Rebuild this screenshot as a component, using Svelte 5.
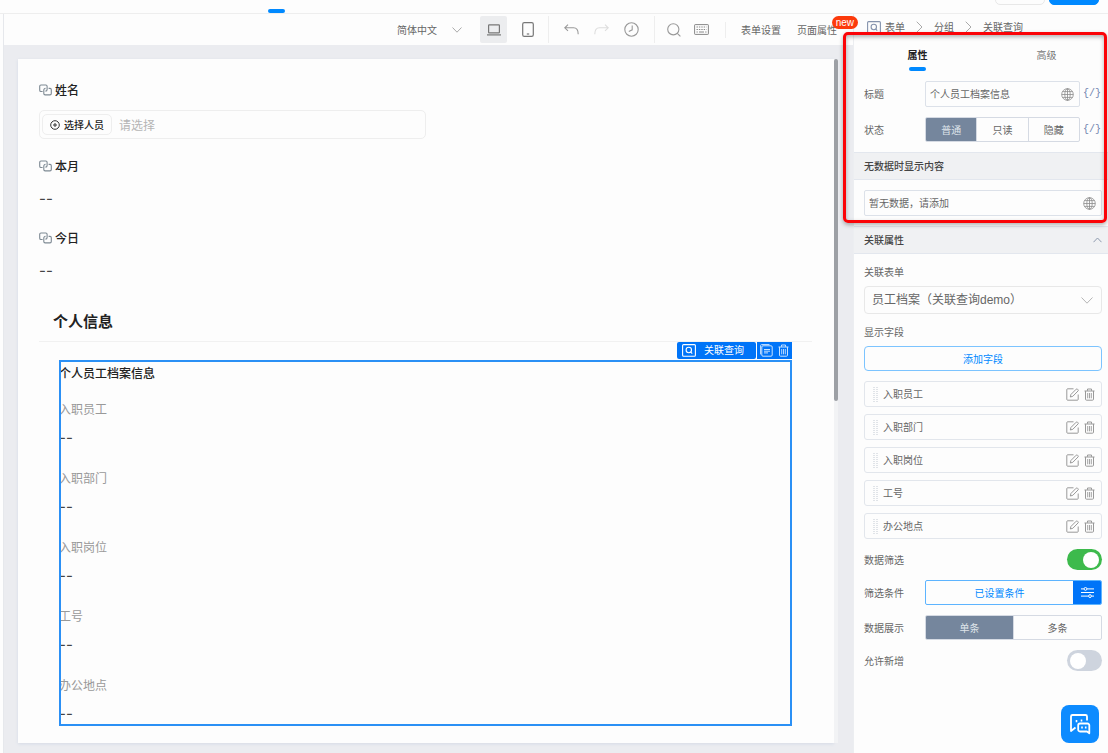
<script lang="ts">
    interface Field {
        id: number;
        name: string;
    }

    const fields: Field[] = [
        { id: 1, name: "入职员工" },
        { id: 2, name: "入职部门" },
        { id: 3, name: "入职岗位" },
        { id: 4, name: "工号" },
        { id: 5, name: "办公地点" },
    ];
    const states = ["普通", "只读", "隐藏"];
    const displayModes = ["单条", "多条"];

    let title = $state("个人员工档案信息");
    let emptyText = $state("暂无数据，请添加");
    let person = $state("");
    let tab = $state("属性");
    let fieldState = $state("普通");
    let displayMode = $state("单条");
    let filterOn = $state(true);
    let allowCreate = $state(false);
</script>

{#snippet linkIcon()}
    <svg class="link-icon" width="13" height="12" viewBox="0 0 13 12" fill="none" stroke="#7d8993" stroke-width="1.1">
        <path d="M3.6 7.5H2A1.3 1.3 0 0 1 .7 6.2V2.300A1.300 1.300 0 0 1 2 1h4.800a1.300 1.300 0 0 1 1.300 1.300V5.400A1.700 1.700 0 0 1 6.400 7.100" />
        <path d="M9.600 4.400H11a1.300 1.300 0 0 1 1.300 1.300v3.900A1.300 1.300 0 0 1 11 10.900H6.100A1.300 1.300 0 0 1 4.800 9.600V6.100a1.700 1.700 0 0 1 1.700-1.700" />
    </svg>
{/snippet}

{#snippet queryIcon()}
    <svg width="14" height="13" viewBox="0 0 14 13" fill="none" stroke="currentColor" stroke-width="1.1">
        <rect x="0.6" y="0.6" width="12.8" height="11.6" rx="1" />
        <circle cx="6.800" cy="6" r="2.700" />
        <path d="M8.800 8l1.400 1.600" />
    </svg>
{/snippet}

{#snippet globeIcon()}
    <svg width="13" height="13" viewBox="0 0 13 13" fill="none" stroke="#8c8c8c" stroke-width="0.8">
        <circle cx="6.500" cy="6.500" r="5.800" />
        <ellipse cx="6.500" cy="6.500" rx="2.700" ry="5.800" />
        <path d="M6.500.7v11.600M.7 6.500h11.600M1.500 3.600h10M1.500 9.400h10" />
    </svg>
{/snippet}

{#snippet trashIcon()}
    <svg width="11" height="13" viewBox="0 0 11 13" fill="none" stroke="currentColor">
        <path d="M.5 3h10M3.500 2.800V1h4v1.800M1.500 3v8.200a1 1 0 0 0 1 1h6a1 1 0 0 0 1-1V3" />
        <path d="M3.700 5v5.300M5.500 5v5.300M7.300 5v5.300" stroke-width="0.9" />
    </svg>
{/snippet}

{#snippet toggle(id: string, on: boolean, flip: () => void)}
    <input {id} class="switch" type="checkbox" role="switch" checked={on} onchange={flip} />
{/snippet}

<div class="app">
    <header class="topbar">
        <span class="nav-active"></span>
        <div class="top-actions">
            <button type="button" class="top-btn" aria-label="预览"></button>
            <button type="button" class="top-btn primary" aria-label="保存"></button>
        </div>
    </header>

    <div class="body">
        <main class="designer">
            <div class="toolbar">
                <label class="lang">
                    <select aria-label="语言">
                        <option>简体中文</option>
                    </select>
                    <svg width="10" height="6" viewBox="0 0 10 6" fill="none" stroke="#aaa">
                        <path d="M.5.5L5 5.200 9.500.5" />
                    </svg>
                </label>
                <div class="tools devices">
                    <button type="button" class="tool active" aria-label="电脑端">
                        <svg width="14" height="12" viewBox="0 0 14 12" fill="none" stroke="#777" stroke-width="1.2">
                            <rect x="1.6" y="0.8" width="10.8" height="8" rx="0.6" />
                            <path d="M0 10.900h14" />
                        </svg>
                    </button>
                    <button type="button" class="tool" aria-label="手机端">
                        <svg width="12" height="15" viewBox="0 0 12 15" fill="none" stroke="#777" stroke-width="1.2">
                            <rect x="0.7" y="0.7" width="10.6" height="13.6" rx="1.6" />
                            <path d="M4.800 12h2.400" />
                        </svg>
                    </button>
                </div>
                <div class="tools history">
                    <button type="button" class="tool" aria-label="撤销">
                        <svg width="15" height="11" viewBox="0 0 15 11" fill="none" stroke="#999" stroke-width="1.1">
                            <path d="M4 .7L.8 3.800 4 6.900M.8 3.800h8.700c3 0 4.700 2 4.700 6.500" />
                        </svg>
                    </button>
                    <button type="button" class="tool" aria-label="重做">
                        <svg width="15" height="11" viewBox="0 0 15 11" fill="none" stroke="#ddd" stroke-width="1.1">
                            <path d="M11 .7l3.200 3.100L11 6.900M14.200 3.800H5.500c-3 0-4.700 2-4.700 6.500" />
                        </svg>
                    </button>
                    <button type="button" class="tool" aria-label="历史">
                        <svg width="15" height="15" viewBox="0 0 15 15" fill="none" stroke="#999" stroke-width="1.1">
                            <circle cx="7.500" cy="7.500" r="6.700" />
                            <path d="M8.200 3.600v4.200L4.800 9.400" />
                        </svg>
                    </button>
                </div>
                <div class="tools search">
                    <button type="button" class="tool" aria-label="搜索">
                        <svg width="14" height="14" viewBox="0 0 14 14" fill="none" stroke="#999" stroke-width="1.1">
                            <circle cx="6.300" cy="6.300" r="5.600" />
                            <path d="M10.300 10.300l3.100 3.100" />
                        </svg>
                    </button>
                    <button type="button" class="tool" aria-label="快捷键">
                        <svg width="15" height="11" viewBox="0 0 15 11" fill="none" stroke="#888">
                            <rect x="0.6" y="0.6" width="13.8" height="9.8" rx="0.6" />
                            <path d="M2.500 3h10M2.500 5.500h10" stroke-dasharray="1.4 1" />
                            <path d="M2.500 8h1.300M5 8h5M11.200 8h1.300" />
                        </svg>
                    </button>
                </div>
                <div class="tools links">
                    <button type="button" class="text-btn">表单设置</button>
                    <button type="button" class="text-btn">
                        页面属性
                        <span class="badge">new</span>
                    </button>
                </div>
            </div>

            <div class="canvas">
                <div class="page">
                    <div class="field">
                        <label class="field-label" for="person">{@render linkIcon()}姓名</label>
                        <div class="picker">
                            <button type="button" class="pick-btn">
                                <svg width="10" height="10" viewBox="0 0 10 10" fill="none" stroke="#333">
                                    <circle cx="5" cy="5" r="4.300" />
                                    <path d="M5 3v4M3 5h4" />
                                </svg>
                                选择人员
                            </button>
                            <input id="person" type="text" placeholder="请选择" bind:value={person} />
                        </div>
                    </div>
                    <div class="field">
                        <div class="field-label">{@render linkIcon()}本月</div>
                        <div class="value">--</div>
                    </div>
                    <div class="field">
                        <div class="field-label">{@render linkIcon()}今日</div>
                        <div class="value">--</div>
                    </div>

                    <h2 class="group-title">个人信息</h2>

                    <section class="selected">
                        <div class="handle">
                            <span class="handle-name">{@render queryIcon()}关联查询</span>
                            <span class="handle-tools">
                                <button type="button" aria-label="复制">
                                    <svg width="13" height="13" viewBox="0 0 13 13" fill="none" stroke="currentColor">
                                        <path d="M9.500.6H1.600a1 1 0 0 0-1 1v8.800" />
                                        <rect x="1.8" y="1.8" width="10.4" height="10.4" rx="1.2" />
                                        <path d="M4 5.500h6M4 7.200h6M4 8.900h4" />
                                    </svg>
                                </button>
                                <button type="button" aria-label="删除">{@render trashIcon()}</button>
                            </span>
                        </div>
                        <h3>{title}</h3>
                        {#each fields as field (field.id)}
                            <div class="query-field">
                                <div class="query-label">{field.name}</div>
                                <div class="value">--</div>
                            </div>
                        {/each}
                    </section>
                </div>
                <div class="scroll-track"><div class="scroll-thumb"></div></div>
            </div>
        </main>

        <aside class="panel">
            <nav class="crumbs">
                <a href="#form">{@render queryIcon()}表单</a>
                <svg width="7" height="12" viewBox="0 0 7 12" fill="none" stroke="#aaa"><path d="M.7.7L6 6 .7 11.300" /></svg>
                <a href="#group">分组</a>
                <svg width="7" height="12" viewBox="0 0 7 12" fill="none" stroke="#aaa"><path d="M.7.7L6 6 .7 11.300" /></svg>
                <a href="#query">关联查询</a>
            </nav>

            <div class="highlighted">
                <div class="tabs">
                    <button type="button" class="tab" class:active={tab === "属性"} onclick={() => (tab = "属性")}>属性</button>
                    <button type="button" class="tab" class:active={tab === "高级"} onclick={() => (tab = "高级")}>高级</button>
                </div>
                <div class="rows">
                    <div class="row">
                        <label for="title">标题</label>
                        <div class="text-box">
                            <input id="title" type="text" bind:value={title} />
                            {@render globeIcon()}
                        </div>
                        <button type="button" class="expr" aria-label="标题表达式">{"{/}"}</button>
                    </div>
                    <div class="row">
                        <span>状态</span>
                        <div class="segment">
                            {#each states as s (s)}
                                <button type="button" class:active={fieldState === s} onclick={() => (fieldState = s)}>{s}</button>
                            {/each}
                        </div>
                        <button type="button" class="expr" aria-label="状态表达式">{"{/}"}</button>
                    </div>
                </div>
                <label class="section-head" for="empty-text">无数据时显示内容</label>
                <div class="rows">
                    <div class="text-box">
                        <input id="empty-text" type="text" bind:value={emptyText} />
                        {@render globeIcon()}
                    </div>
                </div>
                <div class="outline"></div>
            </div>

            <div class="section-head">
                关联属性
                <svg width="9" height="6" viewBox="0 0 9 6" fill="none" stroke="#8d99ad"><path d="M.5 5.200L4.500 1l4 4.200" /></svg>
            </div>
            <div class="rows">
                <div class="stack">
                    <label for="form">关联表单</label>
                    <div class="select-box">
                        <select id="form">
                            <option>员工档案（关联查询demo）</option>
                        </select>
                        <svg width="12" height="7" viewBox="0 0 12 7" fill="none" stroke="#b5b5b5"><path d="M.5.5L6 6.200 11.500.5" /></svg>
                    </div>
                </div>
                <div class="stack">
                    <span>显示字段</span>
                    <button type="button" class="add-btn">添加字段</button>
                </div>
                <ul class="field-list">
                    {#each fields as field (field.id)}
                        <li>
                            <svg width="5" height="15" viewBox="0 0 5 15" stroke="#c3cad3" stroke-dasharray="1 1">
                                <path d="M1 0v15M4 0v15" />
                            </svg>
                            <span>{field.name}</span>
                            <button type="button" aria-label="编辑">
                                <svg width="13" height="13" viewBox="0 0 13 13" fill="none" stroke="currentColor">
                                    <path d="M7.500.8H1.600a.8.8 0 0 0-.8.8v9.800a.8.8 0 0 0 .8.8h9.800a.8.8 0 0 0 .8-.8V6.500" />
                                    <path d="M4.300 9l.6-2.500 5.300-5.300a.9.9 0 0 1 1.300 0l.5.5a.9.9 0 0 1 0 1.300L6.800 8.300z" />
                                </svg>
                            </button>
                            <button type="button" aria-label="删除">{@render trashIcon()}</button>
                        </li>
                    {/each}
                </ul>
                <div class="switch-row">
                    <label for="filter">数据筛选</label>
                    {@render toggle("filter", filterOn, () => (filterOn = !filterOn))}
                </div>
                <div class="row wide">
                    <span>筛选条件</span>
                    <div class="condition">
                        <button type="button" class="condition-text">已设置条件</button>
                        <button type="button" class="condition-icon" aria-label="设置条件">
                            <svg width="13" height="11" viewBox="0 0 13 11" fill="none" stroke="#fff">
                                <path d="M0 1.900h3M6 1.900h7M0 5.500h13M0 9.100h7.500M10.500 9.100H13" />
                                <circle cx="4.500" cy="1.900" r="1.400" />
                                <circle cx="9" cy="9.100" r="1.400" />
                            </svg>
                        </button>
                    </div>
                </div>
                <div class="row wide">
                    <span>数据展示</span>
                    <div class="segment">
                        {#each displayModes as mode (mode)}
                            <button type="button" class:active={displayMode === mode} onclick={() => (displayMode = mode)}>{mode}</button>
                        {/each}
                    </div>
                </div>
                <div class="switch-row">
                    <label for="create">允许新增</label>
                    {@render toggle("create", allowCreate, () => (allowCreate = !allowCreate))}
                </div>
            </div>
        </aside>
    </div>

    <button type="button" class="chat" aria-label="客服">
        <svg width="22" height="22" viewBox="0 0 22 22" fill="none" stroke="#fff" stroke-width="1.8" stroke-linejoin="round">
            <path d="M6.500 14.500L2 18V3.500A1.500 1.500 0 0 1 3.500 2h13A1.500 1.500 0 0 1 18 3.500V7.500" />
            <path d="M11 10.500h7.500a1.800 1.800 0 0 1 1.800 1.800v8l-2.300-1.800h-7a1.800 1.800 0 0 1-1.800-1.800v-4.400a1.800 1.800 0 0 1 1.800-1.800z" />
            <path d="M7.500 7v2.200M12.500 6.500v2M13 13.500v2M16.700 13.500v2" stroke-width="1.6" />
        </svg>
    </button>
</div>

<style>
    :global(body) {
        margin: 0;
    }

    .app {
        display: flex;
        flex-direction: column;
        min-height: 100vh;
        background: #fdfdfd;
        color: #666;
        font-family: "Noto Sans CJK SC", sans-serif;
        font-size: 10px;
        line-height: 16px;
    }

    .app * {
        box-sizing: border-box;
    }

    button,
    input,
    select {
        margin: 0;
        padding: 0;
        border: 0;
        outline: none;
        background: none;
        color: inherit;
        font: inherit;
    }

    button {
        cursor: pointer;
    }

    select {
        appearance: none;
    }

    svg {
        display: block;
        flex: none;
    }

    .topbar {
        display: flex;
        align-items: flex-end;
        justify-content: space-between;
        height: 14px;
        padding: 0 9px 0 268px;
        border-bottom: 1px solid #eee;
        overflow: hidden;
    }

    .nav-active {
        width: 17px;
        height: 4px;
        border-radius: 2px;
        background: #0089ff;
    }

    .top-actions {
        display: flex;
        gap: 4px;
        padding-bottom: 8px;
    }

    .top-btn {
        width: 50px;
        height: 24px;
        border: 1px solid #e8e8e8;
        border-radius: 5px;
    }

    .top-btn.primary {
        border-color: #0089ff;
        background: #0089ff;
    }

    .body {
        display: flex;
        flex: 1;
        padding-left: 3px;
    }

    .designer {
        display: flex;
        flex: 1;
        flex-direction: column;
        min-width: 0;
        border-left: 1px solid #e6e8ec;
    }

    .toolbar {
        display: flex;
        align-items: center;
        justify-content: flex-end;
        height: 31px;
        padding-right: 16px;
    }

    .lang {
        display: flex;
        align-items: center;
        justify-content: space-between;
        width: 65px;
        margin-right: 18px;
    }

    .tools {
        display: flex;
        align-items: center;
        gap: 3px;
        padding: 0 9px;
    }

    .tools + .tools {
        border-left: 1px solid #eee;
    }

    .tools.devices {
        gap: 7px;
        padding: 0 7px 0 0;
    }

    .tools.search {
        gap: 1px;
        padding: 0 10px 0 5px;
    }

    .tools.links {
        gap: 16px;
        padding: 0 0 0 15px;
    }

    .tool {
        display: flex;
        align-items: center;
        justify-content: center;
        width: 27px;
        height: 27px;
        border-radius: 2px;
    }

    .tool.active {
        background: #ecedef;
    }

    .text-btn {
        position: relative;
    }

    .badge {
        position: absolute;
        top: -6px;
        right: -21px;
        padding: 0 4px;
        border-radius: 7px;
        background: #fc3a0c;
        color: #fff;
        font-family: "Liberation Sans", sans-serif;
        font-size: 10px;
        line-height: 13px;
    }

    .canvas {
        display: flex;
        flex: 1;
        padding: 14px 15px 10px 14px;
        background: #ebecf0;
    }

    .page {
        flex: 1;
        min-width: 0;
        padding: 22px 22px 17px 21px;
        background: #fdfdfd;
        box-shadow: 0 1px 3px #d5dbe6;
        color: #222;
        font-size: 12px;
        line-height: 18px;
    }

    .scroll-track {
        width: 4px;
        background: #f2f3f5;
    }

    .scroll-thumb {
        height: 50%;
        border-radius: 2px;
        background: #9da0a5;
    }

    .field {
        margin-bottom: 21px;
    }

    .field:first-child {
        margin-bottom: 18px;
    }

    .field-label {
        display: flex;
        align-items: center;
        gap: 3px;
        height: 18px;
        font-weight: 500;
    }

    .value {
        height: 18px;
        color: #444;
        font-family: Inter, sans-serif;
        font-size: 15px;
    }

    .field .value {
        margin-top: 15px;
    }

    .picker {
        display: flex;
        align-items: center;
        width: 50%;
        max-width: 388px;
        height: 29px;
        margin-top: 11px;
        padding: 0 2px;
        border: 1px solid #eee;
        border-radius: 5px;
    }

    .picker input {
        flex: 1;
        min-width: 0;
        padding-left: 7px;
    }

    .picker input::placeholder {
        color: #b5b5b5;
    }

    .pick-btn {
        display: flex;
        align-items: center;
        gap: 4px;
        height: 21px;
        padding: 0 7px;
        border: 1px solid #eee;
        border-radius: 5px;
        color: #222;
        font-size: 10px;
        font-weight: 500;
    }

    .group-title {
        margin: 29px 0 18px;
        padding: 0 14px 8px;
        border-bottom: 1px solid #f1f1f1;
        font-size: 15px;
        line-height: 24px;
    }

    .selected {
        position: relative;
        margin: 0 20px;
        padding: 2px 0 3px;
        outline: 2px solid #2b90f5;
        outline-offset: -2px;
    }

    .selected h3 {
        margin: 0;
        font-size: 12px;
        font-weight: 500;
        line-height: 22px;
    }

    .query-field {
        margin-top: 22px;
    }

    h3 + .query-field {
        margin-top: 16px;
    }

    .query-label {
        height: 18px;
        margin-bottom: 11px;
        color: #999;
    }

    .handle {
        position: absolute;
        right: 0;
        bottom: 100%;
        display: flex;
        gap: 1px;
        height: 18px;
        padding-bottom: 1px;
        color: #fff;
        font-family: "Liberation Sans", "Noto Sans CJK SC", sans-serif;
        font-size: 10px;
    }

    .handle-name,
    .handle-tools {
        display: flex;
        align-items: center;
        background: #0074f8;
    }

    .handle-name {
        gap: 8px;
        padding: 0 12px 0 5px;
        border-radius: 2px;
    }

    .handle-tools {
        gap: 5px;
        padding: 0 3px;
        color: #c8e2ff;
    }

    .panel {
        display: flex;
        flex: none;
        flex-direction: column;
        width: 255px;
        border-left: 1px solid #eceef1;
    }

    .crumbs {
        display: flex;
        align-items: center;
        gap: 11px;
        height: 26px;
        padding-left: 13px;
    }

    .crumbs a {
        display: flex;
        align-items: center;
        gap: 4px;
        color: #666;
        text-decoration: none;
    }

    .crumbs a svg {
        color: #8593ad;
    }

    .highlighted {
        position: relative;
    }

    /* callout drawn over the property block */
    .outline {
        position: absolute;
        inset: -8px 1px 3px -11px;
        border: 3px solid #fb0307;
        border-radius: 5px;
        box-shadow:
            0 2px 4px rgba(0, 0, 0, 0.3),
            inset 0 2px 4px rgba(0, 0, 0, 0.3);
        pointer-events: none;
    }

    .tabs {
        display: grid;
        grid-template-columns: 1fr 1fr;
        gap: 4px;
    }

    .tab {
        display: flex;
        flex-direction: column;
        align-items: center;
        gap: 4px;
        padding: 7px 0 0 2px;
        color: #777;
    }

    .tab::after {
        width: 17px;
        height: 4px;
        border-radius: 2px;
        content: "";
    }

    .tab.active {
        color: #222;
        font-weight: 700;
    }

    .tab.active::after {
        background: #0089ff;
    }

    .rows {
        display: flex;
        flex-direction: column;
        gap: 10px;
        padding: 10px 6px 10px 10px;
    }

    .row {
        display: grid;
        grid-template-columns: 61px 1fr 22px;
        align-items: center;
    }

    .row.wide {
        grid-template-columns: 61px 1fr;
    }

    .text-box {
        display: flex;
        align-items: center;
        height: 26px;
        padding: 0 5px 0 4px;
        border: 1px solid #dce1e9;
        border-radius: 2px;
    }

    .text-box input {
        flex: 1;
        min-width: 0;
    }

    .expr {
        padding-left: 3px;
        color: #6f83ae;
        font-family: "Liberation Mono", monospace;
        text-align: left;
    }

    .segment {
        display: flex;
        height: 25px;
        border: 1px solid #d5dae3;
        border-radius: 2px;
        overflow: hidden;
    }

    .segment button {
        flex: 1;
    }

    .segment button + button {
        border-left: 1px solid #d5dae3;
    }

    .segment button.active {
        background: #75869d;
        color: #dfe4ea;
    }

    .section-head {
        display: flex;
        align-items: center;
        justify-content: space-between;
        height: 28px;
        padding: 0 6px 0 10px;
        border: 1px solid #e3e7ee;
        border-width: 1px 0;
        background: #f0f1f3;
        color: #444;
        font-weight: 500;
    }

    .stack {
        display: flex;
        flex-direction: column;
        gap: 6px;
    }

    .select-box {
        display: flex;
        align-items: center;
        height: 28px;
        padding: 0 8px 0 7px;
        border: 1px solid #e8e8e8;
        border-radius: 4px;
        font-family: "Liberation Sans", "Noto Sans CJK SC", sans-serif;
        font-size: 12px;
    }

    .select-box select {
        flex: 1;
        min-width: 0;
    }

    .add-btn {
        height: 25px;
        border: 1px solid #7cc4ff;
        border-radius: 4px;
        color: #0089ff;
    }

    .field-list {
        display: flex;
        flex-direction: column;
        gap: 7px;
        margin: 0;
        padding: 0;
        list-style: none;
    }

    .field-list li {
        display: flex;
        align-items: center;
        gap: 5px;
        height: 26px;
        padding: 0 6px 0 8px;
        border: 1px solid #e2e6ec;
        border-radius: 3px;
    }

    .field-list span {
        flex: 1;
    }

    .field-list button {
        color: #999;
    }

    .switch-row {
        display: flex;
        align-items: center;
        justify-content: space-between;
        height: 21px;
    }

    .switch {
        display: flex;
        align-items: center;
        width: 35px;
        height: 21px;
        padding: 0 3px;
        border-radius: 11px;
        background: #ced4de;
        appearance: none;
        cursor: pointer;
    }

    .switch::before {
        width: 16px;
        height: 16px;
        border-radius: 50%;
        background: #fff;
        content: "";
    }

    .switch:checked {
        justify-content: flex-end;
        background: #3dba4c;
    }

    .condition {
        display: flex;
        height: 25px;
        border: 1px solid #5db4ff;
        border-radius: 2px;
        overflow: hidden;
    }

    .condition-text {
        flex: 1;
        color: #0089ff;
    }

    .condition-icon {
        display: flex;
        align-items: center;
        justify-content: center;
        width: 28px;
        background: #0074f8;
    }

    .chat {
        position: fixed;
        right: 9px;
        bottom: 10px;
        display: flex;
        align-items: center;
        justify-content: center;
        width: 38px;
        height: 38px;
        border-radius: 8px;
        background: #0d8bff;
    }
</style>
